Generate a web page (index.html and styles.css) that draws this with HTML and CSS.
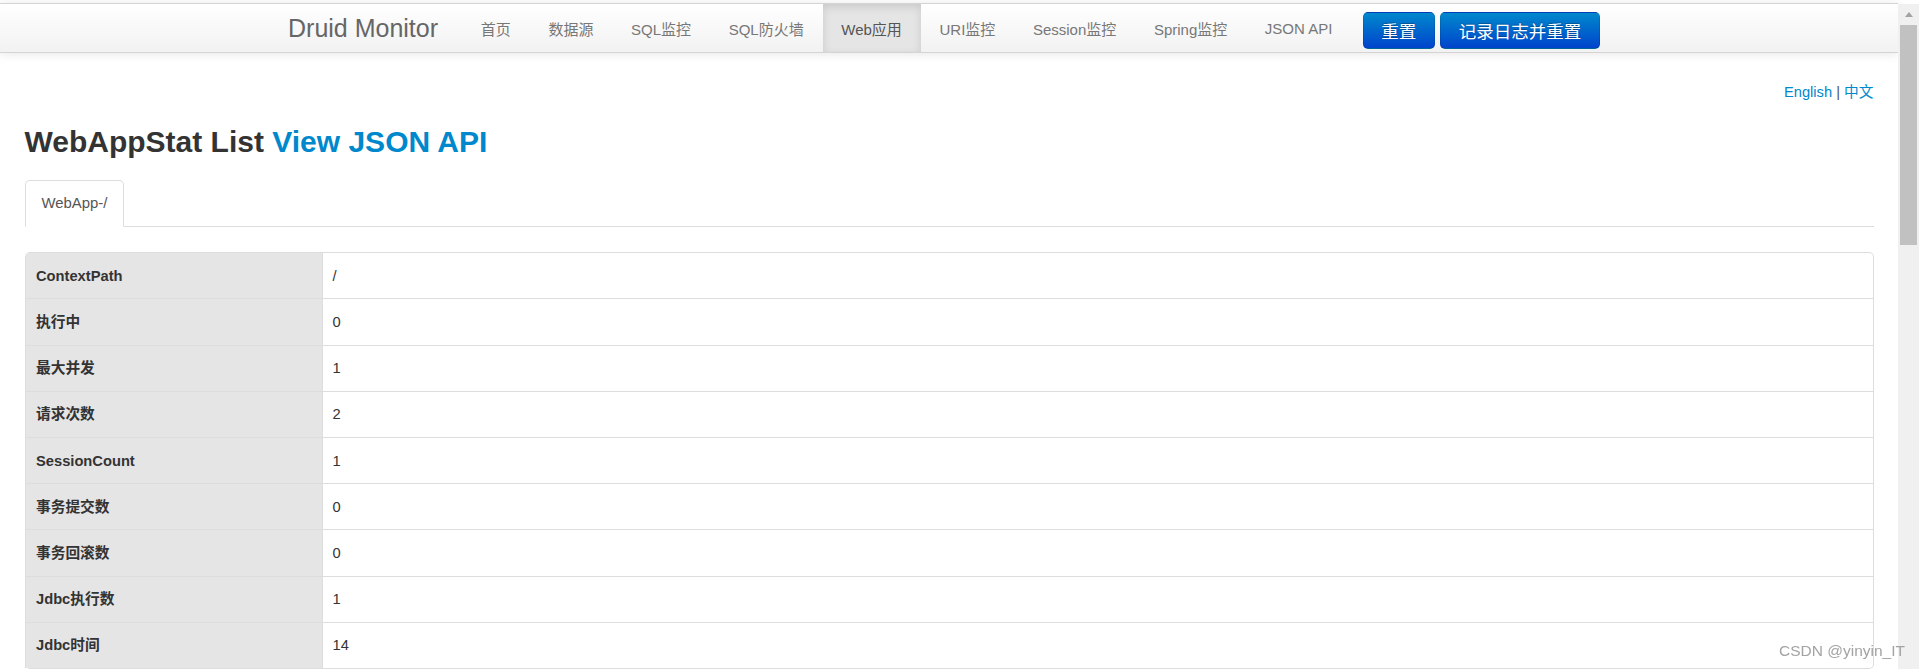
FILE: index.html
```html
<!DOCTYPE html>
<html lang="zh-CN">
<head>
<meta charset="utf-8">
<title>Druid Monitor</title>
<link rel="stylesheet" href="styles.css">
</head>
<body>
<div class="page">
  <div class="navbar">
    <div class="nav-container">
      <a class="brand" href="#">Druid Monitor</a>
      <ul class="nav">
        <li><a href="#">首页</a></li>
        <li><a href="#">数据源</a></li>
        <li><a href="#">SQL监控</a></li>
        <li><a href="#">SQL防火墙</a></li>
        <li class="active"><a href="#">Web应用</a></li>
        <li><a href="#">URI监控</a></li>
        <li><a href="#">Session监控</a></li>
        <li><a href="#">Spring监控</a></li>
        <li><a href="#">JSON API</a></li>
      </ul>
      <div class="nav-buttons">
        <a class="btn" href="#">重置</a>
        <a class="btn" href="#">记录日志并重置</a>
      </div>
    </div>
  </div>

  <div class="content">
    <div class="lang"><a href="#">English</a> <span class="sep">|</span> <a href="#">中文</a></div>
    <h3 class="title">WebAppStat List <a href="#">View JSON API</a></h3>
    <ul class="tabs">
      <li class="active"><a href="#">WebApp-/</a></li>
    </ul>
    <table class="stat-table">
      <tbody>
        <tr><th>ContextPath</th><td>/</td></tr>
        <tr><th>执行中</th><td>0</td></tr>
        <tr><th>最大并发</th><td>1</td></tr>
        <tr><th>请求次数</th><td>2</td></tr>
        <tr><th>SessionCount</th><td>1</td></tr>
        <tr><th>事务提交数</th><td>0</td></tr>
        <tr><th>事务回滚数</th><td>0</td></tr>
        <tr><th>Jdbc执行数</th><td>1</td></tr>
        <tr><th>Jdbc时间</th><td>14</td></tr>
      </tbody>
    </table>
  </div>
</div>

<div class="scrollbar">
  <div class="scroll-up"><span class="arrow-up"></span></div>
  <div class="scroll-thumb"></div>
</div>
<div class="watermark">CSDN @yinyin_IT</div>
</body>
</html>
```

FILE: styles.css
```css
html, body {
  margin: 0;
  padding: 0;
  height: 100%;
  overflow: hidden;
  background: #fff;
}

body {
  font-family: "Liberation Sans", "Noto Sans CJK SC", sans-serif;
  font-size: 14.7px;
  color: #333;
}

a {
  text-decoration: none;
}

.page {
  margin-right: 21px;
}

/* ---------- navbar ---------- */
.navbar {
  margin-top: 3px;
  height: 48px;
  border-top: 1px solid #d4d4d4;
  border-bottom: 1px solid #d4d4d4;
  background: linear-gradient(#ffffff, #f2f2f2);
  box-shadow: 0 1px 10px rgba(0, 0, 0, 0.1);
  position: relative;
  z-index: 2;
}

.nav-container {
  width: 1322px;
  margin: 0 auto;
  height: 48px;
  display: flex;
  align-items: stretch;
}

.brand {
  margin-left: -24.5px;
  padding: 0 24px 0 24.5px;
  font-size: 25px;
  color: #666;
  display: flex;
  align-items: center;
}

.nav {
  list-style: none;
  margin: 0;
  padding: 0;
  display: flex;
}

.nav li {
  display: flex;
}

.nav a {
  display: flex;
  align-items: center;
  padding: 0 18.8px;
  font-size: 15px;
  color: #777;
}

.nav .active a {
  background: #e5e5e5;
  color: #555;
  box-shadow: inset 0 3px 8px rgba(0, 0, 0, 0.125);
}

.nav-buttons {
  display: flex;
  align-items: flex-start;
  gap: 5px;
  margin-left: 11.5px;
  padding-top: 8px;
}

.btn {
  box-sizing: border-box;
  height: 37px;
  padding: 0 17.7px;
  display: flex;
  align-items: center;
  font-size: 17.5px;
  color: #fff;
  background: linear-gradient(#0088cc, #0044cc);
  border: 1px solid;
  border-color: rgba(0, 0, 0, 0.1) rgba(0, 0, 0, 0.1) rgba(0, 0, 0, 0.25);
  border-radius: 5px;
  text-shadow: 0 -1px 0 rgba(0, 0, 0, 0.25);
}

/* ---------- content ---------- */
.content {
  padding: 0 24.5px;
}

.lang {
  margin-top: 28.6px;
  text-align: right;
  line-height: 20px;
  font-size: 14.7px;
  color: #555;
}

.lang a {
  color: #0088cc;
}

.title {
  margin: 20px 0 0;
  font-size: 30px;
  line-height: 40px;
  font-weight: bold;
  color: #333;
}

.title a {
  color: #0088cc;
}

.tabs {
  list-style: none;
  margin: 18.6px 0 0;
  padding: 0;
  display: flex;
  border-bottom: 1px solid #ddd;
}

.tabs li {
  margin-bottom: -1px;
}

.tabs a {
  display: block;
  padding: 10px 15.7px 10px 16px;
  line-height: 25px;
  font-size: 14.9px;
  color: #555;
  background: #fff;
  border: 1px solid #ddd;
  border-bottom-color: transparent;
  border-radius: 5px 5px 0 0;
}

.stat-table {
  margin-top: 25px;
  width: 100%;
  table-layout: fixed;
  border-collapse: separate;
  border-spacing: 0;
  border: 1px solid #ddd;
  border-left: 0;
  border-radius: 5px;
}

.stat-table th,
.stat-table td {
  padding: 10.6px 10px;
  line-height: 24px;
  text-align: left;
  vertical-align: top;
  border-left: 1px solid #ddd;
  border-top: 1px solid #ddd;
  font-size: 14.7px;
}

.stat-table tr:first-child th,
.stat-table tr:first-child td {
  border-top: 0;
}

.stat-table tr:first-child th {
  border-top-left-radius: 5px;
}

.stat-table tr:first-child td {
  border-top-right-radius: 5px;
}

.stat-table th {
  box-sizing: border-box;
  width: 297px;
  padding-left: 10.5px;
  background: #e5e5e5;
  font-weight: bold;
  color: #333;
}

.stat-table td {
  color: #333;
}

/* ---------- fake scrollbar (overlay) ---------- */
.scrollbar {
  position: fixed;
  top: 4px;
  right: 0;
  bottom: 0;
  width: 21px;
  background: #f0f0f0;
  z-index: 5;
}

.scroll-up {
  height: 21px;
  display: flex;
  align-items: center;
  justify-content: center;
}

.arrow-up {
  width: 0;
  height: 0;
  border-left: 4.5px solid transparent;
  border-right: 4.5px solid transparent;
  border-bottom: 5px solid #a3a3a3;
}

.scroll-thumb {
  height: 220px;
  margin: 0 2px;
  background: #c1c1c1;
}

.watermark {
  position: fixed;
  right: 14px;
  bottom: 9px;
  font-size: 15.5px;
  line-height: 18px;
  color: #a3a3a3;
  z-index: 6;
}
```
